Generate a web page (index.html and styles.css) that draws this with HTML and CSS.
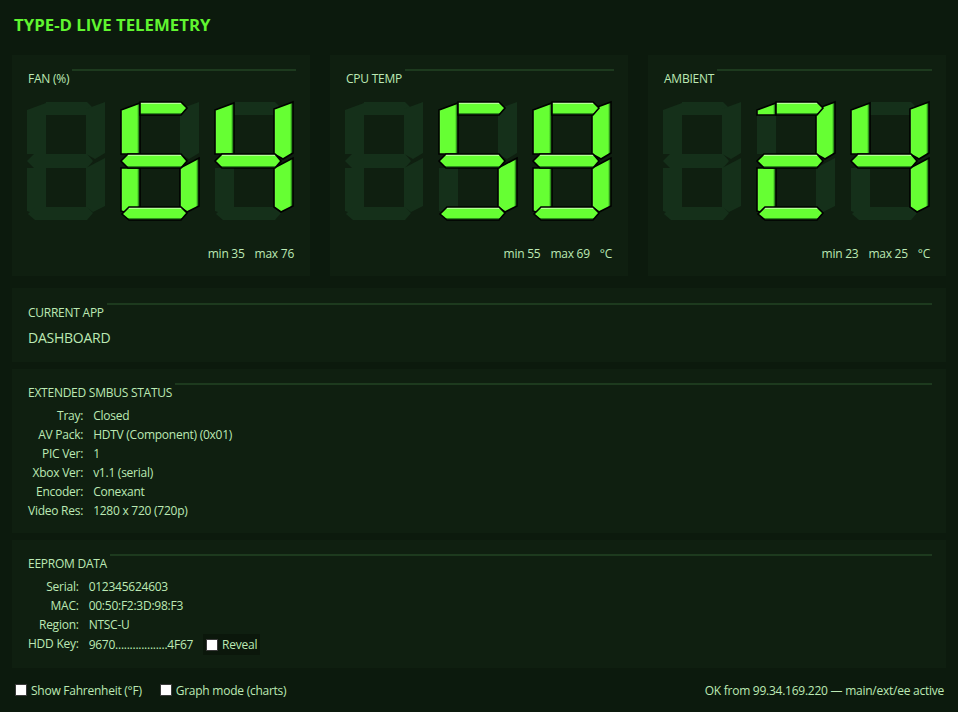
FILE: index.html
```html
<!DOCTYPE html>
<html lang="en">
<head>
<meta charset="utf-8">
<title>TYPE-D Live Telemetry</title>
<link rel="stylesheet" href="styles.css">
</head>
<body>
<svg class="defs" width="0" height="0" aria-hidden="true">
  <defs>
    <linearGradient id="gh" x1="0" y1="0" x2="0" y2="1">
      <stop offset="0" stop-color="#b4ff96"/>
      <stop offset="0.14" stop-color="#b4ff96"/>
      <stop offset="0.17" stop-color="#66ff33"/>
      <stop offset="0.83" stop-color="#66ff33"/>
      <stop offset="0.86" stop-color="#2e921c"/>
      <stop offset="1" stop-color="#2e921c"/>
    </linearGradient>
    <linearGradient id="gv" x1="0" y1="0" x2="1" y2="0">
      <stop offset="0" stop-color="#78ff48"/>
      <stop offset="0.12" stop-color="#66ff33"/>
      <stop offset="0.86" stop-color="#66ff33"/>
      <stop offset="0.89" stop-color="#2e921c"/>
      <stop offset="1" stop-color="#2e921c"/>
    </linearGradient>
    <polygon id="sf" points="2,9 21,2 21,53 2,53"/>
    <polygon id="sac" points="2,9 21,2 21,14 2,14"/>
    <polygon id="sa" points="21,1 62,1 68,7 62,14 21,14"/>
    <polygon id="sb" points="61,8 80,1 80,52 70,58 61,53"/>
    <polygon id="sg" points="2,60 9,53 62,53 68,60 62,67 9,67"/>
    <polygon id="se" points="2,67 21,67 21,106 8,112 2,110"/>
    <polygon id="sc" points="61,67 80,57 80,105 68,111 61,106"/>
    <polygon id="sd" points="3,113 10,106 62,106 68,112 62,119 10,119"/>
    <g id="g8">
      <use href="#sf"/><use href="#sa"/><use href="#sb"/><use href="#sg"/>
      <use href="#se"/><use href="#sc"/><use href="#sd"/>
    </g>
  </defs>
</svg>

<div class="app">
  <h1 class="title">TYPE-D LIVE TELEMETRY</h1>

  <div class="gauges">
    <section class="panel gauge">
      <div class="hdr"><span class="hdr-label">FAN (%)</span><i class="rule"></i></div>
      <div class="digits">
        <svg class="dg" viewBox="0 0 82 120" width="82" height="120"><use href="#g8" class="off"/></svg>
        <svg class="dg" viewBox="0 0 82 120" width="82" height="120"><use href="#g8" class="off"/>
          <use href="#sf" class="v"/><use href="#se" class="v"/><use href="#sc" class="v"/>
          <use href="#sa" class="h"/><use href="#sg" class="h"/><use href="#sd" class="h"/></svg>
        <svg class="dg" viewBox="0 0 82 120" width="82" height="120"><use href="#g8" class="off"/>
          <use href="#sf" class="v"/><use href="#sb" class="v"/><use href="#sc" class="v"/>
          <use href="#sg" class="h"/></svg>
      </div>
      <div class="minmax"><span>min 35</span><span>max 76</span></div>
    </section>

    <section class="panel gauge">
      <div class="hdr"><span class="hdr-label">CPU TEMP</span><i class="rule"></i></div>
      <div class="digits">
        <svg class="dg" viewBox="0 0 82 120" width="82" height="120"><use href="#g8" class="off"/></svg>
        <svg class="dg" viewBox="0 0 82 120" width="82" height="120"><use href="#g8" class="off"/>
          <use href="#sf" class="v"/><use href="#sc" class="v"/>
          <use href="#sa" class="h"/><use href="#sg" class="h"/><use href="#sd" class="h"/></svg>
        <svg class="dg" viewBox="0 0 82 120" width="82" height="120"><use href="#g8" class="off"/>
          <use href="#sf" class="v"/><use href="#sb" class="v"/><use href="#se" class="v"/><use href="#sc" class="v"/>
          <use href="#sa" class="h"/><use href="#sg" class="h"/><use href="#sd" class="h"/></svg>
      </div>
      <div class="minmax"><span>min 55</span><span>max 69</span><span>°C</span></div>
    </section>

    <section class="panel gauge">
      <div class="hdr"><span class="hdr-label">AMBIENT</span><i class="rule"></i></div>
      <div class="digits">
        <svg class="dg" viewBox="0 0 82 120" width="82" height="120"><use href="#g8" class="off"/></svg>
        <svg class="dg" viewBox="0 0 82 120" width="82" height="120"><use href="#g8" class="off"/>
          <use href="#sb" class="v"/><use href="#se" class="v"/>
          <use href="#sac" class="v"/><use href="#sa" class="h"/><use href="#sg" class="h"/><use href="#sd" class="h"/></svg>
        <svg class="dg" viewBox="0 0 82 120" width="82" height="120"><use href="#g8" class="off"/>
          <use href="#sf" class="v"/><use href="#sb" class="v"/><use href="#sc" class="v"/>
          <use href="#sg" class="h"/></svg>
      </div>
      <div class="minmax"><span>min 23</span><span>max 25</span><span>°C</span></div>
    </section>
  </div>

  <section class="panel app-panel">
    <div class="hdr"><span class="hdr-label">CURRENT APP</span><i class="rule"></i></div>
    <div class="app-name">DASHBOARD</div>
  </section>

  <section class="panel info">
    <div class="hdr"><span class="hdr-label">EXTENDED SMBUS STATUS</span><i class="rule"></i></div>
    <dl class="kv">
      <dt>Tray:</dt><dd>Closed</dd>
      <dt>AV Pack:</dt><dd>HDTV (Component) (0x01)</dd>
      <dt>PIC Ver:</dt><dd>1</dd>
      <dt>Xbox Ver:</dt><dd>v1.1 (serial)</dd>
      <dt>Encoder:</dt><dd>Conexant</dd>
      <dt>Video Res:</dt><dd>1280 x 720 (720p)</dd>
    </dl>
  </section>

  <section class="panel info eeprom">
    <div class="hdr"><span class="hdr-label">EEPROM DATA</span><i class="rule"></i></div>
    <dl class="kv">
      <dt>Serial:</dt><dd>012345624603</dd>
      <dt>MAC:</dt><dd>00:50:F2:3D:98:F3</dd>
      <dt>Region:</dt><dd>NTSC-U</dd>
      <dt>HDD Key:</dt><dd class="key">9670..................4F67<label class="reveal"><input type="checkbox" class="cb"><span>Reveal</span></label></dd>
    </dl>
  </section>

  <footer class="bar">
    <label class="opt"><input type="checkbox" class="cb"><span>Show Fahrenheit (°F)</span></label>
    <label class="opt"><input type="checkbox" class="cb"><span>Graph mode (charts)</span></label>
    <span class="status">OK from 99.34.169.220 — main/ext/ee active</span>
  </footer>
</div>
</body>
</html>
```

FILE: styles.css
```css
* { box-sizing: border-box; }

html, body {
  margin: 0;
  padding: 0;
  background: #0c1a0d;
  width: 958px;
  height: 712px;
  overflow: hidden;
}

body {
  font-family: "Open Sans", "Noto Sans", "Liberation Sans", sans-serif;
  font-size: 12px;
  letter-spacing: -0.25px;
  color: #bce9b4;
}

.defs {
  display: block;
  width: 0;
  height: 0;
  overflow: hidden;
}

.app {
  padding: 0 12px;
}

.title {
  margin: 0;
  padding-top: 15px;
  height: 55px;
  line-height: 20px;
  font-size: 16.8px;
  font-weight: 700;
  color: #60f530;
  letter-spacing: 0;
  padding-left: 2px;
}

.panel {
  background: #0f1f10;
  padding: 14px 14px 0 16px;
}

.hdr {
  display: flex;
  align-items: flex-start;
}

.hdr-label {
  margin-top: 1px;
  line-height: 17px;
  white-space: nowrap;
}

.rule {
  flex: 1;
  height: 2px;
  margin-left: 3px;
  background: #1d3a1e;
}

.gauges {
  display: grid;
  grid-template-columns: repeat(3, 1fr);
  column-gap: 20px;
}

.gauge {
  height: 221px;
}

.digits {
  display: flex;
  gap: 12px;
  margin: 14px 0 0 -3px;
  height: 120px;
}

.dg {
  display: block;
  overflow: visible;
}

.off {
  fill: #15301a;
}

.v {
  fill: url(#gv);
  stroke: #000;
  stroke-width: 1.6;
  stroke-linejoin: miter;
}

.h {
  fill: url(#gh);
  stroke: #000;
  stroke-width: 1.6;
  stroke-linejoin: miter;
}

.minmax {
  display: flex;
  justify-content: flex-end;
  gap: 10px;
  margin-top: 25px;
  padding-right: 2px;
  line-height: 16px;
}

.app-panel {
  margin-top: 12px;
  height: 74px;
  padding-top: 15px;
}

.app-name {
  margin-top: 7px;
  line-height: 20px;
  font-size: 14px;
}

.info {
  margin-top: 7px;
  height: 164px;
}

.eeprom {
  height: 128px;
}

.kv {
  display: grid;
  grid-template-columns: auto 1fr;
  column-gap: 10px;
  margin: 5px 0 0;
  line-height: 19px;
}

.kv dt {
  text-align: right;
  white-space: nowrap;
}

.kv dd {
  margin: 0;
  white-space: nowrap;
}

.key {
  display: flex;
  align-items: center;
}

.reveal {
  display: inline-flex;
  align-items: center;
  gap: 4px;
  margin-left: 10px;
  padding: 0 3px;
  height: 21px;
  background: #0b170b;
}

.cb {
  appearance: none;
  -webkit-appearance: none;
  margin: 0;
  width: 12px;
  height: 12px;
  background: #fff;
  border: 1px solid #3a3a3a;
  border-radius: 0;
  flex: none;
}

.bar {
  display: flex;
  align-items: center;
  margin: 12px -12px 0;
  padding: 0 14px 0 15px;
  height: 20px;
  gap: 18px;
}

.opt {
  display: inline-flex;
  align-items: center;
  gap: 4px;
}

.status {
  margin-left: auto;
}
```
